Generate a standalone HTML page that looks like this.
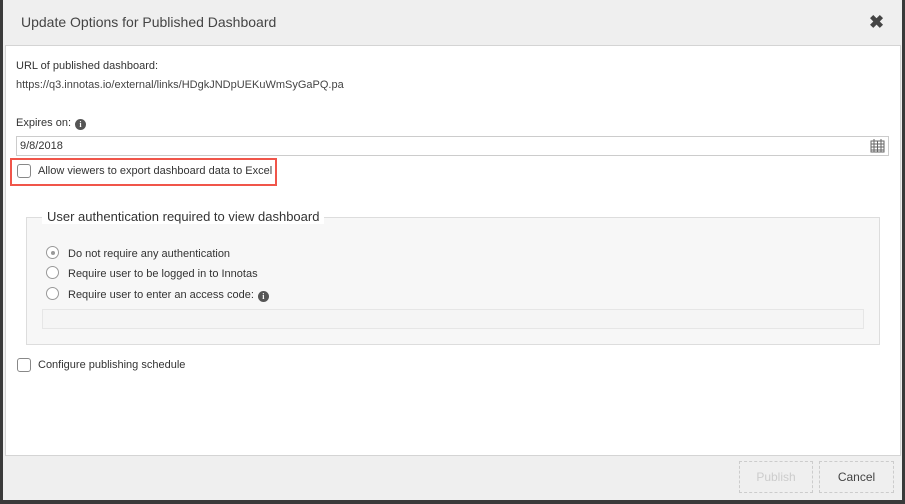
<!DOCTYPE html>
<html><head><style>
body{margin:0;width:905px;height:504px;background:#3a3a3a;font-family:"Liberation Sans",sans-serif;position:relative;overflow:hidden;color:#333}
.dlg{position:absolute;left:3px;top:0;width:899px;height:500px;background:#efefef}
.hdr{position:absolute;left:18px;top:14px;font-size:14px;color:#444}
.x{position:absolute;left:866px;top:12px;font-size:18px;font-weight:bold;color:#444}
.body{position:absolute;left:2px;top:45px;width:894px;height:409px;background:#fff;border:1px solid #d4d4d4}
.t{position:absolute;font-size:11px;color:#333;white-space:nowrap}
.info{display:inline-block;width:11px;height:11px;border-radius:50%;background:#555;color:#fff;font-size:8px;line-height:11px;text-align:center;font-weight:bold;vertical-align:-1px;margin-left:4px;font-family:"Liberation Serif",serif}
.cb{position:absolute;width:12px;height:12px;border:1px solid #888;border-radius:3px;background:#fff}
.rd{position:absolute;width:11px;height:11px;border:1.5px solid #999;border-radius:50%;background:#fff}
.btn{position:absolute;top:461px;height:30px;border:1px dashed #ccc;font-size:12px;text-align:center;line-height:30px}
</style></head><body>
<div class="dlg">
<div class="hdr">Update Options for Published Dashboard</div>
<div class="x">✖</div>
<div class="body">
<div class="t" style="left:10px;top:14px">URL of published dashboard:</div>
<div class="t" style="left:10px;top:33px;color:#444">https://q3.innotas.io/external/links/HDgkJNDpUEKuWmSyGaPQ.pa</div>
<div class="t" style="left:10px;top:71px">Expires on:<span class="info">i</span></div>
<div style="position:absolute;left:10px;top:90px;width:871px;height:18px;border:1px solid #ccc"></div>
<div class="t" style="left:14px;top:94px">9/8/2018</div>
<svg style="position:absolute;left:864px;top:92px" width="15" height="15" viewBox="0 0 15 15" fill="none" stroke="#666" stroke-width="1"><rect x="1" y="3" width="13" height="11"/><path d="M1 6h13M1 9h13M1 12h13M4 3v11M7.5 3v11M11 3v11M4 1v3M11 1v3"/></svg>
<div style="position:absolute;left:4px;top:112px;width:263px;height:24px;border:2px solid #f0554a"></div>
<div class="cb" style="left:11px;top:118px"></div>
<div class="t" style="left:32px;top:119px">Allow viewers to export dashboard data to Excel</div>
<div style="position:absolute;left:20px;top:171px;width:852px;height:126px;border:1px solid #ddd;background:#f7f7f7"></div>
<div class="t" style="left:36px;top:163px;font-size:13px;background:#fff;padding:0 5px">User authentication required to view dashboard</div>
<div class="rd" style="left:40px;top:200px"></div>
<div style="position:absolute;left:45px;top:205px;width:4px;height:4px;border-radius:50%;background:#999"></div>
<div class="t" style="left:62px;top:202px">Do not require any authentication</div>
<div class="rd" style="left:40px;top:220px"></div>
<div class="t" style="left:62px;top:222px">Require user to be logged in to Innotas</div>
<div class="rd" style="left:40px;top:241px"></div>
<div class="t" style="left:62px;top:243px">Require user to enter an access code:<span class="info">i</span></div>
<div style="position:absolute;left:36px;top:263px;width:820px;height:18px;border:1px solid #e6e6e6;background:#f5f5f5"></div>
<div class="cb" style="left:11px;top:312px"></div>
<div class="t" style="left:32px;top:313px">Configure publishing schedule</div>
</div>
<div class="btn" style="left:736px;width:72px;color:#ccc">Publish</div>
<div class="btn" style="left:816px;width:73px;color:#444">Cancel</div>
</div>
</body></html>
